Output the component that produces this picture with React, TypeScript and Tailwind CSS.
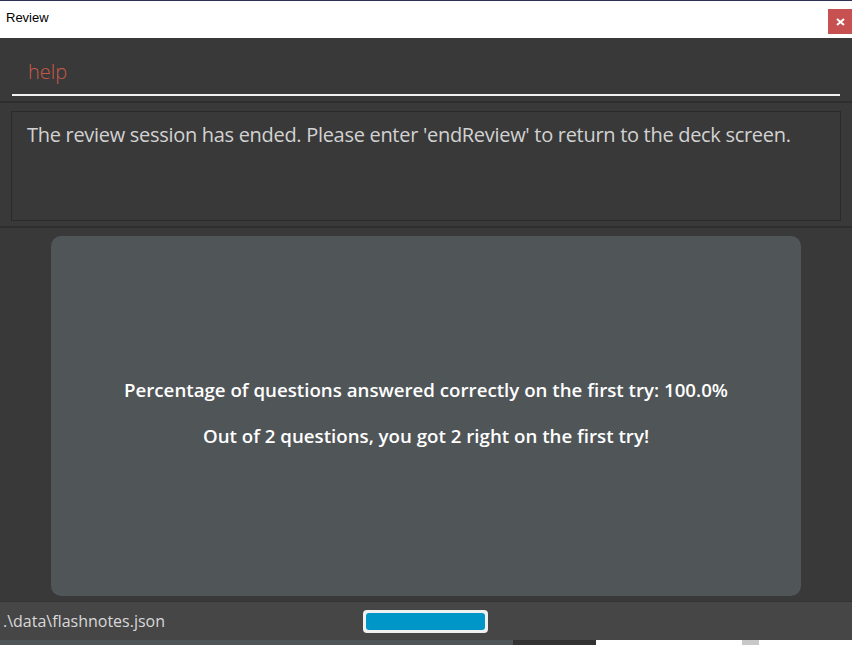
import React from "react";

export default function App() {
  const font = { fontFamily: '"Open Sans", "Noto Sans", sans-serif' };
  return (
    <div className="w-[852px] h-[645px] flex flex-col overflow-hidden bg-[#393939]" style={font}>
      <div className="h-px bg-[#2a3152]" />
      <div className="h-[37px] bg-white flex justify-between">
        <span className="pl-[6px] pt-[9px] text-[13px] leading-[16px] text-black" style={{ fontFamily: '"Liberation Sans", sans-serif' }}>
          Review
        </span>
        <div className="mt-[8px] w-[24px] h-[25px] bg-[#c75050] flex items-center justify-center">
          <svg width="9" height="8" viewBox="0 0 9 8">
            <path d="M1 1 L8 7 M8 1 L1 7" stroke="white" strokeWidth="2" />
          </svg>
        </div>
      </div>
      <div className="flex-1 flex flex-col bg-[#393939]">
        <div className="h-[63px] px-[12px] pt-[17px]">
          <div className="h-[41px] border-b-2 border-[#f2f2f2] pl-[16px] text-[20px] leading-[34px] font-light text-[#c85a4b]">
            help
          </div>
        </div>
        <div className="h-[2px] bg-[#2e2e2e]" />
        <div className="h-[123px] px-[11px] pt-[8px]">
          <div className="h-[110px] border border-[#2a2a2a] pl-[15px] pt-[8px] text-[20px] leading-[30px] tracking-[-0.3px] text-[#d2d2d2]">
            The review session has ended. Please enter 'endReview' to return to the deck screen.
          </div>
        </div>
        <div className="h-[2px] bg-[#2e2e2e]" />
        <div className="flex-1 px-[51px] pt-[8px] pb-[5px] flex">
          <div className="flex-1 rounded-[10px] bg-[#505558] flex flex-col items-center justify-center gap-[16px] text-white font-semibold text-[18.7px] leading-[30px]">
            <div className="mt-[-7px]">Percentage of questions answered correctly on the first try: 100.0%</div>
            <div>Out of 2 questions, you got 2 right on the first try!</div>
          </div>
        </div>
        <div className="h-[39px] bg-[#464646] border-t border-[#333333] flex items-center">
          <span className="pl-[3px] w-[363px] text-[16px] text-[#d8d8d8]">.\data\flashnotes.json</span>
          <div className="w-[125px] h-[23px] rounded-[4px] bg-[#f0f0f0] p-[3px]">
            <div className="h-full rounded-[3px] bg-[#0096c8]" />
          </div>
        </div>
      </div>
      <div className="h-[5px] flex">
        <div className="w-[513px] bg-[#505558]" />
        <div className="w-[83px] bg-[#333333]" />
        <div className="flex-1 bg-white flex">
          <div className="ml-[146px] w-[17px] bg-[#c8c8c8]" />
        </div>
      </div>
    </div>
  );
}
